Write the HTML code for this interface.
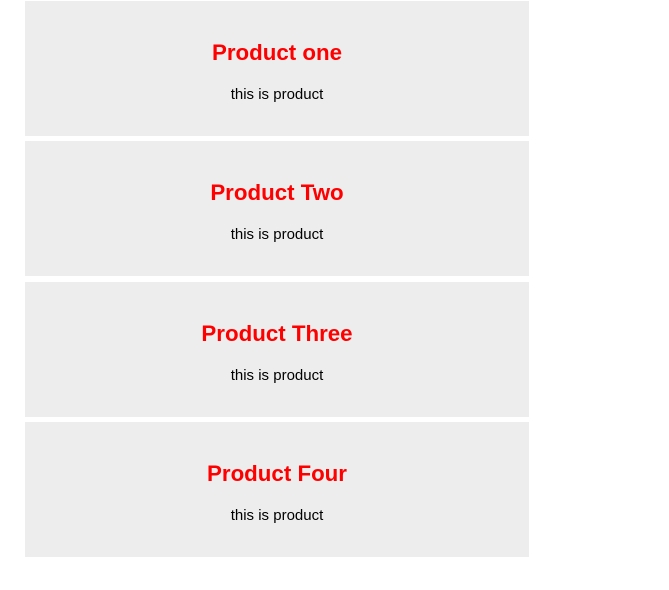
<!DOCTYPE html>
<html><head><style>
body{margin:0;background:#fff;font-family:"Liberation Sans",Arial,sans-serif;}
.b{position:absolute;left:25px;width:504px;height:135px;background:#ededed;text-align:center;}
.b h2{position:absolute;left:0;right:0;top:39px;margin:0;font-size:22.3px;line-height:26px;color:#f00;font-weight:bold;}
.b p{position:absolute;left:0;right:0;top:85px;margin:0;font-size:15px;line-height:18px;color:#000;}
</style></head><body>
<div class="b" style="top:1px"><h2>Product one</h2><p>this is product</p></div>
<div class="b" style="top:141px"><h2>Product Two</h2><p>this is product</p></div>
<div class="b" style="top:282px"><h2>Product Three</h2><p>this is product</p></div>
<div class="b" style="top:422px"><h2>Product Four</h2><p>this is product</p></div>
</body></html>
